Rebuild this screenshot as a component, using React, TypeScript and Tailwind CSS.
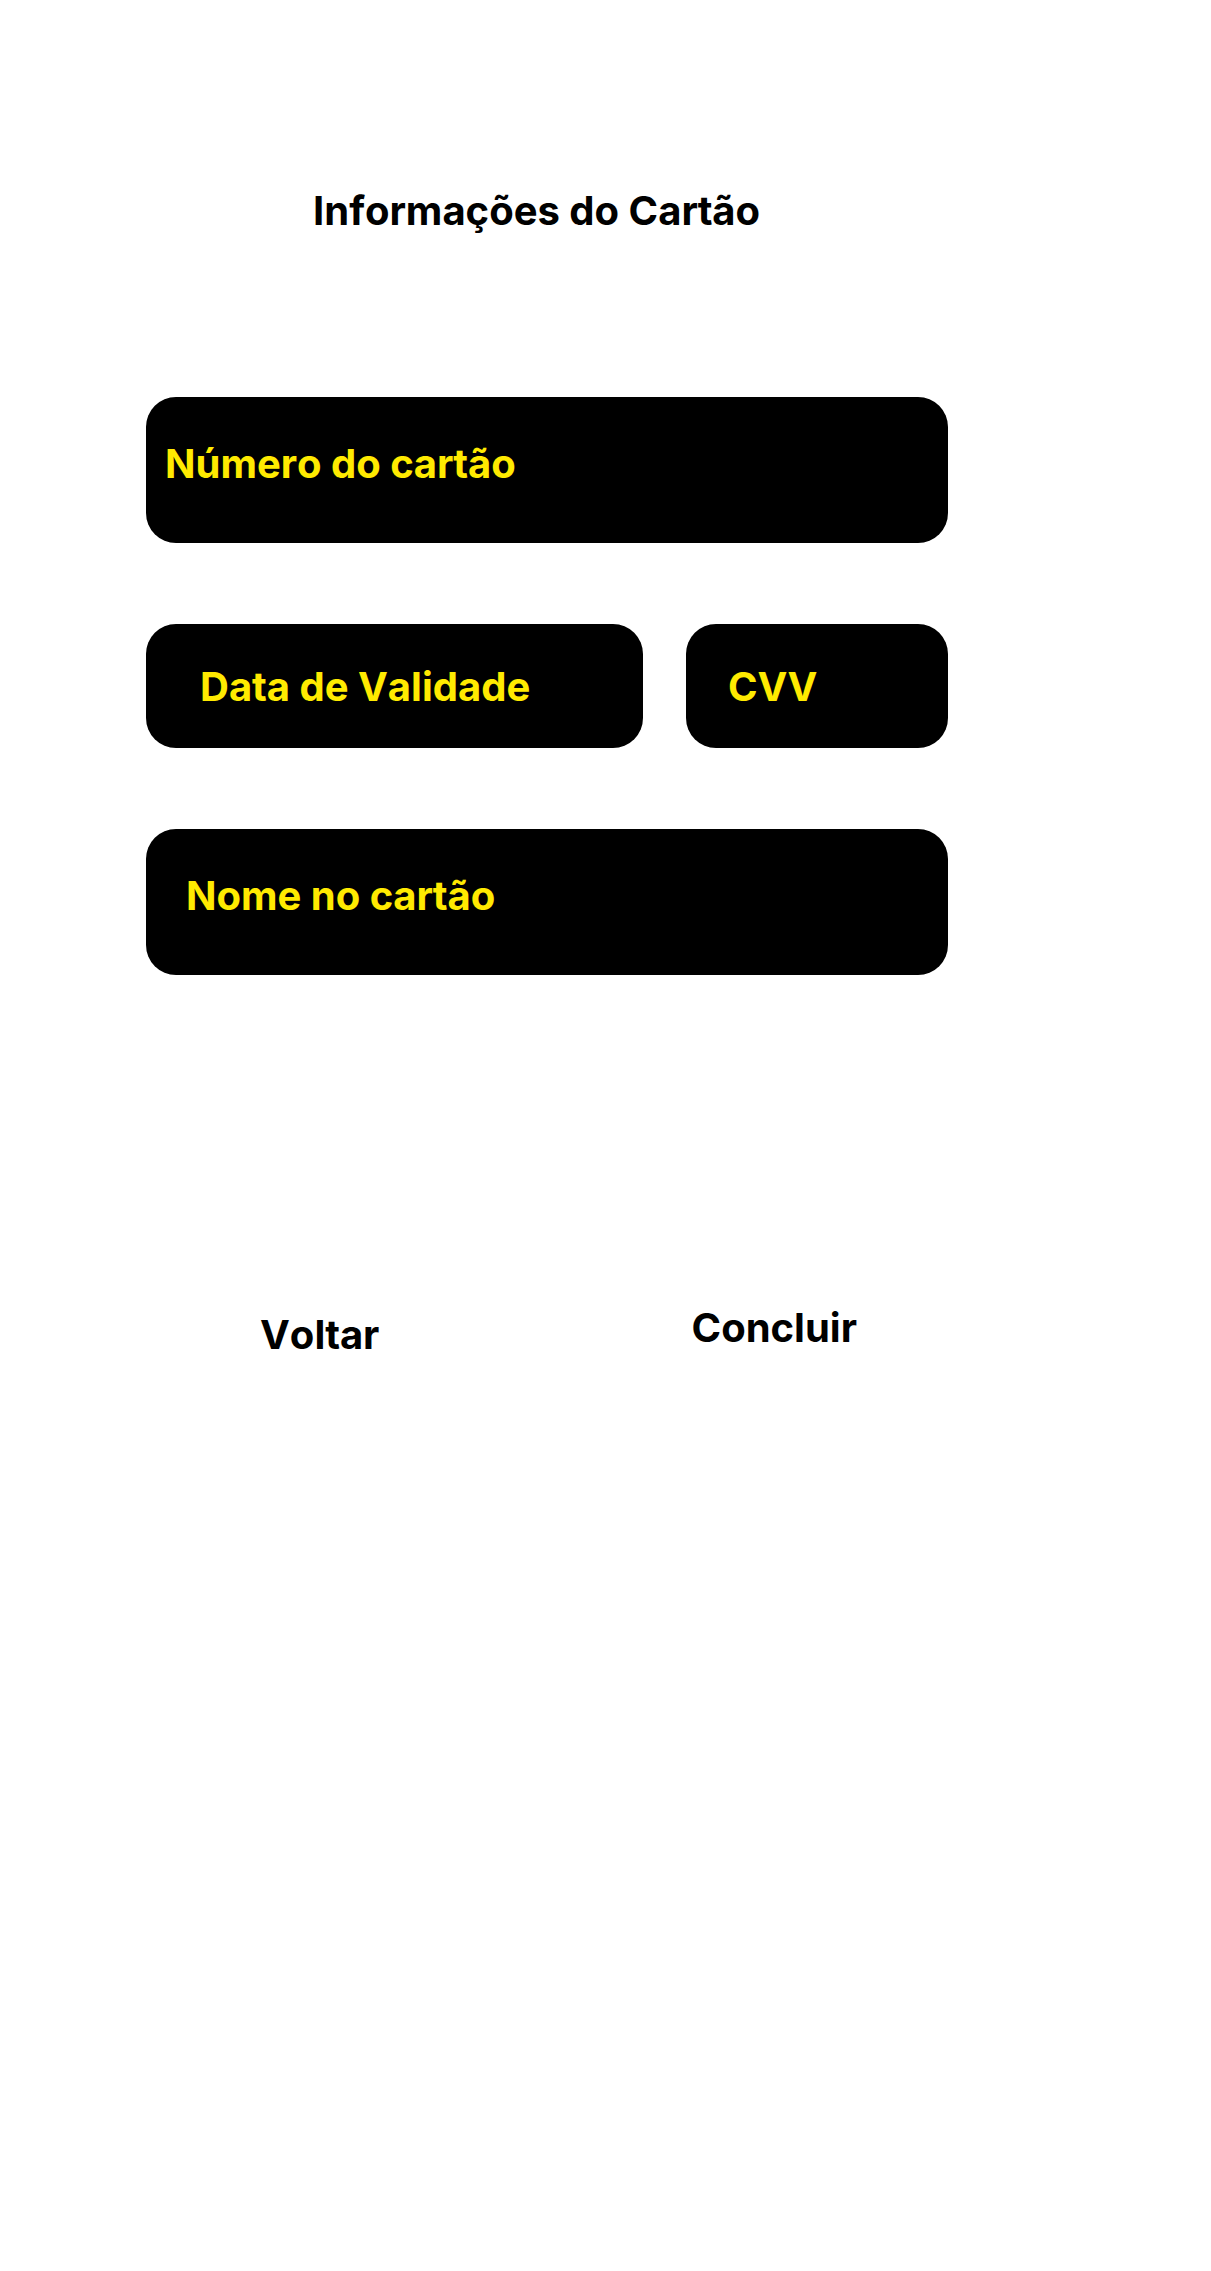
import type { InputHTMLAttributes } from "react";
import { twMerge } from "tailwind-merge";

type FieldProps = InputHTMLAttributes<HTMLInputElement> & {
  id: string;
  label: string;
};

function Field({ id, label, className, ...rest }: FieldProps) {
  return (
    <input
      id={id}
      name={id}
      type="text"
      aria-label={label}
      placeholder={label}
      className={twMerge(
        "block w-full min-w-0 rounded-[30px] bg-black pr-4 text-[40px] leading-[48px] font-bold text-[#ffea00] placeholder:text-[#ffea00] placeholder:opacity-100",
        className,
      )}
      {...rest}
    />
  );
}

export default function App() {
  return (
    <main className="min-h-screen bg-white pt-[187px] pr-[263px] pl-[146px] font-['Inter',sans-serif] text-[40px] leading-[48px] font-bold text-black [font-kerning:none]">
      <h1 className="pl-[167px] whitespace-nowrap">Informações do Cartão</h1>

      <form className="mt-[162px]" onSubmit={(e) => e.preventDefault()}>
        <div className="flex flex-col gap-[81px]">
          <Field
            id="numero"
            label="Número do cartão"
            inputMode="numeric"
            autoComplete="cc-number"
            className="h-[146px] pb-[14px] pl-[19px]"
          />
          <div className="grid grid-cols-[497fr_262fr] gap-[43px]">
            <Field
              id="validade"
              label="Data de Validade"
              autoComplete="cc-exp"
              className="h-[124px] pl-[54px]"
            />
            <Field
              id="cvv"
              label="CVV"
              inputMode="numeric"
              autoComplete="cc-csc"
              className="h-[124px] pl-[42px]"
            />
          </div>
          <Field
            id="nome"
            label="Nome no cartão"
            autoComplete="cc-name"
            className="h-[146px] pb-[14px] pl-[40px]"
          />
        </div>

        <div className="mt-[329px] flex items-start justify-between pr-[91px] pl-[114px]">
          <button type="button" className="mt-[7px] cursor-pointer">
            Voltar
          </button>
          <button type="submit" className="cursor-pointer">
            Concluir
          </button>
        </div>
      </form>
    </main>
  );
}
